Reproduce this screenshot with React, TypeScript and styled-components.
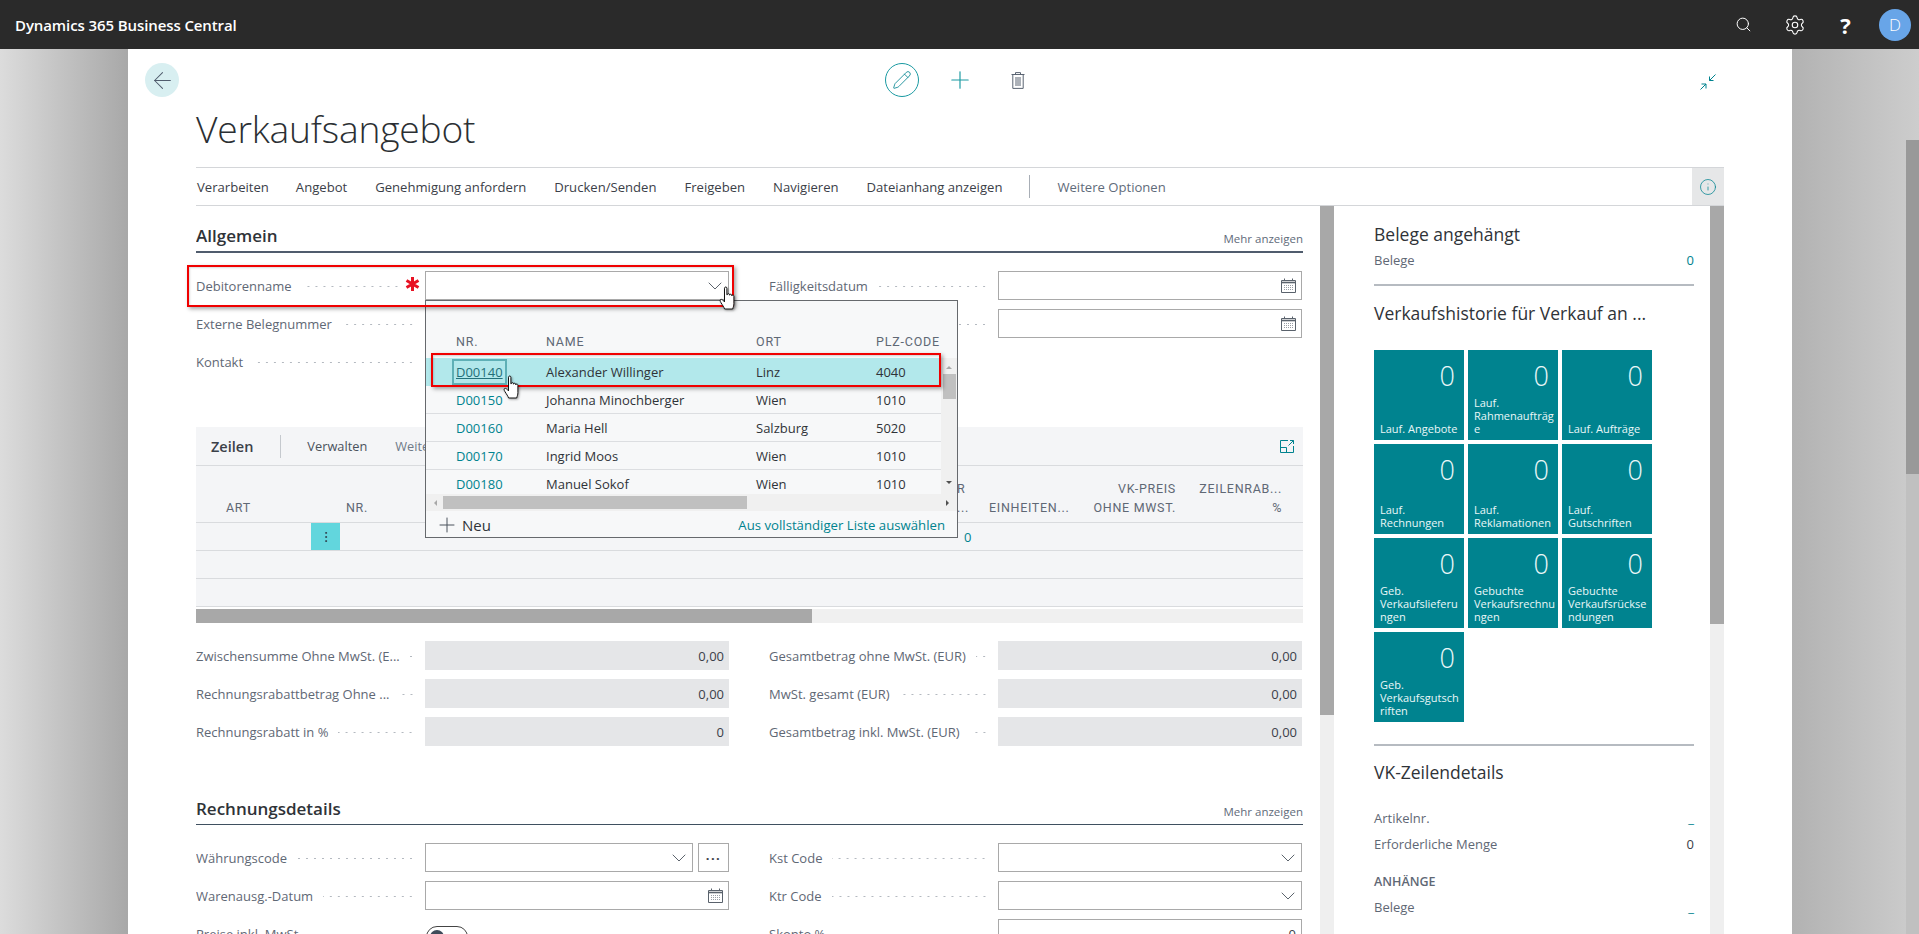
import React from "react";
import styled, { createGlobalStyle } from "styled-components";
import { ArrowLeft, ChevronDown, EllipsisVertical, Info, Pencil, Plus, Search, Settings } from "lucide-react";

const FONT = `"Open Sans", "Noto Sans", sans-serif`;

const Global = createGlobalStyle`
  html, body { margin: 0; padding: 0; height: 100%; overflow: hidden; background: #c4c4c4; }
  #root { height: 100%; }
  * { box-sizing: border-box; }
  body { font-family: ${FONT}; font-size: 13px; color: #505c6d; }
`;

const Stage = styled.div`
  position: relative;
  height: 934px;
  display: flex;
  flex-direction: column;
  overflow: hidden;
`;

/* top bar */
const TopBar = styled.header`
  height: 49px;
  flex: none;
  background: #2a2a2a;
  display: flex;
  align-items: center;
  padding: 0 8px 0 15px;
  color: #fff;
`;
const Brand = styled.div`
  font-size: 15px;
  font-weight: 600;
  letter-spacing: -0.1px;
  margin-right: auto;
`;
const BarIcon = styled.div`
  width: 51px;
  height: 49px;
  display: flex;
  align-items: center;
  justify-content: center;
`;
const Question = styled.span`
  font-size: 22px;
  font-weight: 700;
  color: #fff;
`;
const Avatar = styled.div`
  width: 32px;
  height: 32px;
  margin-left: 8px;
  border-radius: 50%;
  background: #68a5e8;
  color: #fff;
  display: flex;
  align-items: center;
  justify-content: center;
  font-size: 17px;
  font-weight: 300;
`;

/* backdrop */
const Backdrop = styled.div`
  flex: 1;
  min-height: 0;
  display: flex;
`;
const LeftGutter = styled.div`
  width: 128px;
  flex: none;
  background: linear-gradient(90deg, #dcdcdc, #a8a8a8);
`;
const RightGutter = styled.div`
  flex: 1;
  display: flex;
  justify-content: flex-end;
  background: linear-gradient(90deg, #b2b2b2, #cdcdcd);
`;
const PageBar = styled.div`
  width: 13px;
  margin-top: 91px;
  background: #c0c0c0;
`;
const PageThumb = styled.div`
  height: 334px;
  background: #999;
`;
const Sheet = styled.main`
  width: 1664px;
  flex: none;
  background: #fff;
  display: flex;
  flex-direction: column;
  min-height: 0;
`;

/* nav row */
const NavRow = styled.div`
  height: 53px;
  flex: none;
  padding: 14px 68px 0 17px;
  display: flex;
  align-items: flex-start;
`;
const RoundBtn = styled.div<{ $variant: "back" | "edit" }>`
  width: 34px;
  height: 34px;
  flex: none;
  border-radius: 50%;
  display: flex;
  align-items: center;
  justify-content: center;
  background: ${(p) => (p.$variant === "back" ? "#d8eff1" : "#fff")};
  border: ${(p) => (p.$variant === "edit" ? "1px solid #1a9aa2" : "none")};
  margin-left: ${(p) => (p.$variant === "edit" ? "706px" : "0")};
`;
const NavIcon = styled.div`
  width: 34px;
  height: 34px;
  margin-left: 24px;
  flex: none;
  display: flex;
  align-items: center;
  justify-content: center;
`;
const CollapseIcon = styled.div`
  margin-left: auto;
  margin-right: 8px;
  margin-top: 11px;
  height: 16px;
`;
const Title = styled.h1`
  margin: 0;
  height: 65px;
  padding-left: 68px;
  font-size: 37.2px;
  line-height: 54px;
  font-weight: 300;
  color: #2b2f33;
  letter-spacing: -0.2px;
`;

/* action bar */
const ActionBar = styled.nav`
  margin: 0 68px;
  height: 39px;
  flex: none;
  border-top: 1px solid #d4d6d9;
  border-bottom: 1px solid #d4d6d9;
  display: flex;
  align-items: center;
`;
const ActionItem = styled.span<{ $x: number; $muted?: boolean }>`
  margin-left: ${(p) => p.$x}px;
  padding-top: 1px;
  font-size: 13.1px;
  white-space: nowrap;
  color: ${(p) => (p.$muted ? "#5f6b7a" : "#3b4048")};
`;
const ActionDivider = styled.span`
  width: 1px;
  height: 23px;
  margin-left: 27px;
  background: #a8aeb6;
`;
const InfoBtn = styled.div`
  margin-left: auto;
  width: 32px;
  height: 37px;
  background: #e6e7e8;
  display: flex;
  align-items: center;
  justify-content: center;
`;

/* body */
const Body = styled.div`
  flex: 1;
  min-height: 0;
  margin: 0 68px;
  display: flex;
`;
const MainCol = styled.div`
  width: 1107px;
  flex: none;
  overflow: hidden;
`;
const VBar = styled.div<{ $thumb: number; $ml: number }>`
  width: 14px;
  flex: none;
  margin-left: ${(p) => p.$ml}px;
  background: linear-gradient(#a8a8a8 ${(p) => p.$thumb}px, #efefef ${(p) => p.$thumb}px);
`;
const SideCol = styled.aside`
  width: 376px;
  flex: none;
  padding: 0 16px 0 40px;
  overflow: hidden;
`;

/* section */
const SectionHead = styled.div<{ $heavy?: boolean; $top: number; $h: number }>`
  margin-top: ${(p) => p.$top}px;
  height: ${(p) => p.$h}px;
  display: flex;
  justify-content: space-between;
  align-items: flex-end;
  padding-bottom: 3px;
  border-bottom: ${(p) => (p.$heavy ? "2px solid #505c6d" : "1px solid #3f5060")};
`;
const SectionTitle = styled.h2`
  margin: 0;
  font-size: 17px;
  line-height: 24px;
  font-weight: 600;
  color: #2f3338;
`;
const MoreLink = styled.span`
  font-size: 11.5px;
  margin-bottom: 2px;
  color: #5f6b7a;
`;
const FieldGrid = styled.div<{ $top: number }>`
  margin-top: ${(p) => p.$top}px;
  display: grid;
  grid-template-columns: 533px 533px;
  column-gap: 40px;
`;
const FieldCol = styled.div`
  display: flex;
  flex-direction: column;
  gap: 9px;
`;
const Row = styled.div`
  height: 29px;
  display: flex;
  align-items: center;
`;
const LabelArea = styled.div`
  width: 229px;
  flex: none;
  display: flex;
  align-items: center;
  padding: 1px 10px 0 0;
`;
const LabelText = styled.span`
  font-size: 13px;
  white-space: nowrap;
  color: #5f6875;
`;
const Leader = styled.span`
  flex: 1;
  min-width: 0;
  height: 3px;
  margin-left: 10px;
  background-image: radial-gradient(circle, #b4b9c0 0.8px, transparent 1px);
  background-size: 8px 3px;
  background-repeat: repeat-x;
  background-position: right center;
`;
const Star = styled.svg`
  width: 15px;
  height: 14px;
  margin: -5px -5px 0 5px;
  flex: none;
`;
const Control = styled.div`
  flex: 1;
  display: flex;
  gap: 5px;
  height: 29px;
`;
const Box = styled.div<{ $filled?: boolean }>`
  flex: 1;
  height: 29px;
  display: flex;
  align-items: center;
  justify-content: flex-end;
  padding: 0 5px;
  font-size: 13px;
  color: #3b4048;
  background: ${(p) => (p.$filled ? "#e5e6e8" : "#fff")};
  border: ${(p) => (p.$filled ? "none" : "1px solid #a9a9a9")};
`;
const Chevron = styled(ChevronDown).attrs({ size: 24, strokeWidth: 0.9, color: "#4a525c" })`
  margin-right: -4px;
`;
const DotsBtn = styled.div`
  width: 31px;
  flex: none;
  border: 1px solid #a9a9a9;
  display: flex;
  align-items: center;
  justify-content: center;
  font-size: 13px;
  font-weight: 700;
  letter-spacing: 1.5px;
  color: #3b4048;
`;
const Toggle = styled.div`
  width: 42px;
  height: 22px;
  margin-top: 7px;
  margin-left: 1px;
  border: 1px solid #444;
  border-radius: 11px;
  padding: 3px;
`;
const Knob = styled.div`
  width: 14px;
  height: 14px;
  border-radius: 50%;
  background: #3f4b5a;
`;

/* lines */
const Lines = styled.section`
  margin-top: 51px;
  background: #f4f5f7;
`;
const LinesBar = styled.div`
  height: 39px;
  display: flex;
  align-items: center;
  padding: 0 9px 0 15px;
  border-bottom: 1px solid #d9dbde;
`;
const LinesTitle = styled.span`
  font-size: 14.5px;
  font-weight: 600;
  color: #3b4048;
`;
const LinesDivider = styled.span`
  width: 1px;
  height: 23px;
  margin: 0 26px 0 27px;
  background: #c5c9ce;
`;
const LinesAction = styled.span<{ $muted?: boolean }>`
  font-size: 12.8px;
  margin-right: 28px;
  color: ${(p) => (p.$muted ? "#6f7a88" : "#4a525c")};
`;
const ExpandIcon = styled.div`
  margin-left: auto;
  height: 14px;
`;
const LineGrid = styled.div`
  display: grid;
  grid-template-columns: 115px 29px 617px 32px 96px 95px 108px 15px;
`;
const HeadCell = styled.div<{ $right?: boolean; $pad?: number }>`
  height: 57px;
  border-bottom: 1px solid #d9dbde;
  display: flex;
  flex-direction: column;
  justify-content: flex-end;
  padding-bottom: 5px;
  padding-left: ${(p) => (p.$right ? 0 : p.$pad ?? 0)}px;
  padding-right: ${(p) => (p.$right ? p.$pad ?? 0 : 0)}px;
  text-align: ${(p) => (p.$right ? "right" : "left")};
  font-family: Roboto, ${FONT};
  font-size: 12.5px;
  line-height: 19px;
  font-weight: 400;
  letter-spacing: 0.7px;
  color: #5f6875;
  white-space: nowrap;
`;
const BodyCell = styled.div<{ $handle?: boolean; $link?: boolean }>`
  height: 28px;
  border-bottom: 1px solid #d9dbde;
  display: flex;
  align-items: center;
  justify-content: ${(p) => (p.$handle ? "center" : "flex-start")};
  padding-left: ${(p) => (p.$link ? 7 : 0)}px;
  background: ${(p) => (p.$handle ? "#62d6dd" : "transparent")};
  font-size: 13px;
  color: #00838f;
`;
const HBar = styled.div<{ $thumb: number }>`
  height: 14px;
  margin-top: 2px;
  background: linear-gradient(90deg, #a8a8a8 ${(p) => p.$thumb}px, #f0f0f0 ${(p) => p.$thumb}px);
`;

/* side pane */
const SideTitle = styled.h3<{ $top: number }>`
  margin: ${(p) => p.$top}px 0 0;
  font-size: 17.5px;
  line-height: 22px;
  font-weight: 400;
  color: #2f3338;
`;
const SideRow = styled.div<{ $top: number }>`
  margin-top: ${(p) => p.$top}px;
  height: 20px;
  display: flex;
  justify-content: space-between;
  align-items: center;
  font-size: 13px;
  color: #5f6875;
`;
const SideValue = styled.span<{ $teal?: boolean }>`
  color: ${(p) => (p.$teal ? "#00838f" : "#3b4048")};
`;
const SideRule = styled.div<{ $top: number }>`
  margin-top: ${(p) => p.$top}px;
  height: 2px;
  background: #b6bbc1;
`;
const TileGrid = styled.div`
  margin-top: 26px;
  display: grid;
  grid-template-columns: repeat(3, 90px);
  grid-auto-rows: 90px;
  gap: 4px;
`;
const Tile = styled.div`
  background: #00838f;
  color: #eaf7f8;
  display: flex;
  flex-direction: column;
  padding: 8px 6px 5px 6px;
`;
const TileValue = styled.div`
  text-align: right;
  padding-right: 3px;
  font-size: 27px;
  line-height: 36px;
  font-weight: 300;
`;
const TileLabel = styled.div`
  margin-top: auto;
  font-size: 11px;
  line-height: 13px;
  white-space: pre;
`;
const SideCaption = styled.div`
  margin-top: 18px;
  font-size: 12.5px;
  line-height: 20px;
  font-weight: 600;
  color: #5f6875;
`;

/* lookup dropdown */
const Lookup = styled.div`
  position: absolute;
  left: 425px;
  top: 300px;
  width: 533px;
  height: 238px;
  border: 1px solid #66696d;
  background: #f7f8f9;
  display: flex;
  flex-direction: column;
`;
const LookupGrid = styled.div`
  display: grid;
  grid-template-columns: 90px 210px 120px 1fr;
  padding-left: 30px;
`;
const LookupHead = styled(LookupGrid)`
  height: 57px;
  flex: none;
  align-items: end;
  padding-bottom: 9px;
  font-family: Roboto, ${FONT};
  font-size: 12.5px;
  font-weight: 400;
  letter-spacing: 0.8px;
  color: #5f6875;
`;
const LookupMiddle = styled.div`
  height: 136px;
  flex: none;
  display: flex;
  overflow: hidden;
`;
const LookupRows = styled.div`
  flex: 1;
  min-width: 0;
`;
const LookupRow = styled(LookupGrid)<{ $active?: boolean }>`
  height: 28px;
  align-items: center;
  font-size: 13px;
  color: #2f3338;
  background: ${(p) => (p.$active ? "#b2e8eb" : "transparent")};
  border-bottom: ${(p) => (p.$active ? "none" : "1px solid #dcdee1")};
`;
const NrLink = styled.span<{ $focused?: boolean }>`
  color: #00838f;
  justify-self: start;
  ${(p) =>
    p.$focused &&
    `
    text-decoration: underline;
    outline: 2px solid #5fb0b6;
    outline-offset: 2px;
    color: #24707a;
  `}
`;
const LookupVBar = styled.div`
  width: 16px;
  flex: none;
  background: #f0f0f0;
  display: flex;
  flex-direction: column;
  align-items: center;
  justify-content: space-between;
  padding-bottom: 7px;
`;
const LookupVThumb = styled.div`
  width: 13px;
  height: 25px;
  background: #c0c0c0;
`;
const ScrollArrow = styled.span<{ $dir: "up" | "down" | "left" | "right" }>`
  width: 0;
  height: 0;
  flex: none;
  border: 3.5px solid transparent;
  ${(p) => {
    const side = { up: "bottom", down: "top", left: "right", right: "left" }[p.$dir];
    const tone = p.$dir === "up" || p.$dir === "left" ? "#a8a8a8" : "#505050";
    return `border-${side}-color: ${tone};`;
  }}
`;
const ArrowSlot = styled.div`
  height: 16px;
  display: flex;
  flex-direction: column;
  align-items: center;
  justify-content: center;
`;
const LookupHBar = styled.div`
  height: 17px;
  flex: none;
  background: #f0f0f0;
  display: flex;
  align-items: center;
  padding: 0 5px;
`;
const LookupHThumb = styled.div`
  width: 304px;
  height: 13px;
  margin-left: 6px;
  margin-right: auto;
  background: #c0c0c0;
`;
const LookupFoot = styled.div`
  flex: 1;
  display: flex;
  align-items: center;
  justify-content: space-between;
  padding: 2px 12px 0 9px;
`;
const NewBtn = styled.span`
  display: flex;
  align-items: center;
  gap: 3px;
  font-size: 15px;
  color: #2f3338;
`;
const FullList = styled.span`
  font-size: 13.2px;
  color: #00838f;
`;

/* annotations */
const RedBox = styled.div<{ $l: number; $t: number; $w: number; $h: number }>`
  position: absolute;
  left: ${(p) => p.$l}px;
  top: ${(p) => p.$t}px;
  width: ${(p) => p.$w}px;
  height: ${(p) => p.$h}px;
  border: 2px solid #f00000;
  box-shadow: 2px 2px 4px rgba(0, 0, 0, 0.35), inset 1px 1px 2px rgba(0, 0, 0, 0.15);
  pointer-events: none;
`;
const Hand = styled.svg<{ $l: number; $t: number }>`
  position: absolute;
  left: ${(p) => p.$l}px;
  top: ${(p) => p.$t}px;
  width: 17px;
  height: 25px;
  filter: drop-shadow(1px 1px 1px rgba(0, 0, 0, 0.35));
`;

/* small drawings */
const CalendarIcon = () => (
  <svg width="15" height="15" viewBox="0 0 15 15" fill="none" stroke="#5a626c" strokeWidth="1">
    <path d="M.5 2.500h14v12H.5z" />
    <path d="M.5 4.500h14" strokeWidth="1.600" />
    <path d="M3.500.5v2M11.500.5v2" />
    <path d="M3 7.500h9M3 9.500h9M3 11.500h9" strokeDasharray="1 1" strokeWidth=".9" stroke="#8d939c" />
  </svg>
);
const TrashIcon = () => (
  <svg width="14" height="17" viewBox="0 0 14 17" fill="none" stroke="#5a6472" strokeWidth="1">
    <path d="M.5 2.500h13M4.500 2.500V.6h5v1.900M1.800 2.500v13.900h10.400V2.500M5 5v9M7 5v9M9 5v9" />
  </svg>
);
const HandPath = () => (
  <path
    d="M5.500 2.200c0-1.600 2.400-1.600 2.400 0v6.600l.4-.1c0-1.400 2.200-1.400 2.200 0v.5c0-1.300 2.200-1.300 2.200.1v.6c.1-1.200 2.200-1.100 2.200.3v7.500c0 2-.6 3-1.200 5.300H5.600c-.7-2-1.900-3.600-3.600-6.300-1-1.500-1.400-3 0-3.300.8-.2 1.800.5 3.500 2.500V2.200z"
    fill="#fff"
    stroke="#111"
    strokeWidth="1"
    strokeLinejoin="round"
  />
);

const LOOKUP = [
  ["D00140", "Alexander Willinger", "Linz", "4040"],
  ["D00150", "Johanna Minochberger", "Wien", "1010"],
  ["D00160", "Maria Hell", "Salzburg", "5020"],
  ["D00170", "Ingrid Moos", "Wien", "1010"],
  ["D00180", "Manuel Sokof", "Wien", "1010"],
];
const TILES = [
  "Lauf. Angebote",
  "Lauf.\nRahmenaufträg\ne",
  "Lauf. Aufträge",
  "Lauf.\nRechnungen",
  "Lauf.\nReklamationen",
  "Lauf.\nGutschriften",
  "Geb.\nVerkaufslieferu\nngen",
  "Gebuchte\nVerkaufsrechnu\nngen",
  "Gebuchte\nVerkaufsrückse\nndungen",
  "Geb.\nVerkaufsgutsch\nriften",
];

const Field: React.FC<{ label?: string; required?: boolean; children?: React.ReactNode }> = ({ label, required, children }) => (
  <Row>
    <LabelArea>
      {label && <LabelText>{label}</LabelText>}
      <Leader />
      {required && (
        <Star viewBox="0 0 15 14" stroke="#e81123" strokeWidth="3">
          <path d="M7.500 0v14M1.500 3.500l12 7M13.500 3.500l-12 7" />
        </Star>
      )}
    </LabelArea>
    <Control>{children}</Control>
  </Row>
);

const ActionItems: [string, number][] = [
  ["Verarbeiten", 1],
  ["Angebot", 27],
  ["Genehmigung anfordern", 28],
  ["Drucken/Senden", 28],
  ["Freigeben", 28],
  ["Navigieren", 28],
  ["Dateianhang anzeigen", 28],
];

export default function App() {
  return (
    <Stage>
      <Global />
      <TopBar>
        <Brand>Dynamics 365 Business Central</Brand>
        <BarIcon><Search size={17} strokeWidth={1.4} color="#fff" /></BarIcon>
        <BarIcon><Settings size={22} strokeWidth={1.2} color="#fff" /></BarIcon>
        <BarIcon><Question>?</Question></BarIcon>
        <Avatar>D</Avatar>
      </TopBar>
      <Backdrop>
        <LeftGutter />
        <Sheet>
          <NavRow>
            <RoundBtn $variant="back"><ArrowLeft size={27} strokeWidth={0.9} color="#505c6d" /></RoundBtn>
            <RoundBtn $variant="edit"><Pencil size={20} strokeWidth={1} color="#00838f" /></RoundBtn>
            <NavIcon><Plus size={28} strokeWidth={1} color="#1a9aa2" /></NavIcon>
            <NavIcon><TrashIcon /></NavIcon>
            <CollapseIcon>
              <svg width="16" height="16" viewBox="0 0 16 16" fill="none" stroke="#00838f" strokeWidth="1">
                <path d="M15.500.5L9.500 6.500M9.500 2.500v4h4M.5 15.500L6 10M1.500 10H6v4.500" />
              </svg>
            </CollapseIcon>
          </NavRow>
          <Title>Verkaufsangebot</Title>
          <ActionBar>
            {ActionItems.map(([t, x]) => <ActionItem key={t} $x={x}>{t}</ActionItem>)}
            <ActionDivider />
            <ActionItem $x={27} $muted>Weitere Optionen</ActionItem>
            <InfoBtn><Info size={18} strokeWidth={1} color="#00838f" /></InfoBtn>
          </ActionBar>
          <Body>
            <MainCol>
              <SectionHead $heavy $top={0} $h={47}>
                <SectionTitle>Allgemein</SectionTitle>
                <MoreLink>Mehr anzeigen</MoreLink>
              </SectionHead>
              <FieldGrid $top={18}>
                <FieldCol>
                  <Field label="Debitorenname" required><Box><Chevron /></Box></Field>
                  <Field label="Externe Belegnummer"><Box /></Field>
                  <Field label="Kontakt"><Box /></Field>
                </FieldCol>
                <FieldCol>
                  <Field label="Fälligkeitsdatum"><Box><CalendarIcon /></Box></Field>
                  <Field><Box><CalendarIcon /></Box></Field>
                </FieldCol>
              </FieldGrid>
              <Lines>
                <LinesBar>
                  <LinesTitle>Zeilen</LinesTitle>
                  <LinesDivider />
                  <LinesAction>Verwalten</LinesAction>
                  <LinesAction $muted>Weitere Optionen</LinesAction>
                  <ExpandIcon>
                    <svg width="14" height="13" viewBox="0 0 14 13" fill="none" stroke="#00838f" strokeWidth="1">
                      <path d="M8 .5H.5v12h13V6M.5 7.500H6.500v5M8.500 5.500L13.500.5M10 .5h3.500V4" />
                    </svg>
                  </ExpandIcon>
                </LinesBar>
                <LineGrid>
                  <HeadCell $pad={30}>ART</HeadCell>
                  <HeadCell />
                  <HeadCell $pad={6}>NR.</HeadCell>
                  <HeadCell $pad={0}><span>R</span><span>...</span></HeadCell>
                  <HeadCell><span>EINHEITEN...</span></HeadCell>
                  <HeadCell $right $pad={4}><span>VK-PREIS</span><span>OHNE MWST.</span></HeadCell>
                  <HeadCell $right $pad={6}><span>ZEILENRAB...</span><span>%</span></HeadCell>
                  <HeadCell />
                  {Array.from({ length: 3 }).flatMap((_, r) =>
                    Array.from({ length: 8 }).map((_, c) => (
                      <BodyCell key={`${r}-${c}`} $handle={r === 0 && c === 1} $link={r === 0 && c === 3}>
                        {r === 0 && c === 1 && <EllipsisVertical size={14} strokeWidth={1.5} color="#2f3b48" />}
                        {r === 0 && c === 3 && "0"}
                      </BodyCell>
                    ))
                  )}
                </LineGrid>
              </Lines>
              <HBar $thumb={616} />
              <FieldGrid $top={18}>
                <FieldCol>
                  <Field label="Zwischensumme Ohne MwSt. (E..."><Box $filled>0,00</Box></Field>
                  <Field label="Rechnungsrabattbetrag Ohne ..."><Box $filled>0,00</Box></Field>
                  <Field label="Rechnungsrabatt in %"><Box $filled>0</Box></Field>
                </FieldCol>
                <FieldCol>
                  <Field label="Gesamtbetrag ohne MwSt. (EUR)"><Box $filled>0,00</Box></Field>
                  <Field label="MwSt. gesamt (EUR)"><Box $filled>0,00</Box></Field>
                  <Field label="Gesamtbetrag inkl. MwSt. (EUR)"><Box $filled>0,00</Box></Field>
                </FieldCol>
              </FieldGrid>
              <SectionHead $top={37} $h={42}>
                <SectionTitle>Rechnungsdetails</SectionTitle>
                <MoreLink>Mehr anzeigen</MoreLink>
              </SectionHead>
              <FieldGrid $top={18}>
                <FieldCol>
                  <Field label="Währungscode"><Box><Chevron /></Box><DotsBtn>···</DotsBtn></Field>
                  <Field label="Warenausg.-Datum"><Box><CalendarIcon /></Box></Field>
                  <Field label="Preise inkl. MwSt."><Toggle><Knob /></Toggle></Field>
                </FieldCol>
                <FieldCol>
                  <Field label="Kst Code"><Box><Chevron /></Box></Field>
                  <Field label="Ktr Code"><Box><Chevron /></Box></Field>
                  <Field label="Skonto %"><Box>0</Box></Field>
                </FieldCol>
              </FieldGrid>
            </MainCol>
            <VBar $thumb={509} $ml={17} />
            <SideCol>
              <SideTitle $top={17}>Belege angehängt</SideTitle>
              <SideRow $top={5}>Belege<SideValue $teal>0</SideValue></SideRow>
              <SideRule $top={14} />
              <SideTitle $top={16}>Verkaufshistorie für Verkauf an ...</SideTitle>
              <TileGrid>
                {TILES.map((t) => (
                  <Tile key={t}>
                    <TileValue>0</TileValue>
                    <TileLabel>{t}</TileLabel>
                  </Tile>
                ))}
              </TileGrid>
              <SideRule $top={22} />
              <SideTitle $top={15}>VK-Zeilendetails</SideTitle>
              <SideRow $top={25}>Artikelnr.<SideValue $teal>_</SideValue></SideRow>
              <SideRow $top={6}>Erforderliche Menge<SideValue>0</SideValue></SideRow>
              <SideCaption>ANHÄNGE</SideCaption>
              <SideRow $top={5}>Belege<SideValue $teal>_</SideValue></SideRow>
            </SideCol>
            <VBar $thumb={418} $ml={0} />
          </Body>
        </Sheet>
        <RightGutter>
          <PageBar><PageThumb /></PageBar>
        </RightGutter>
      </Backdrop>

      <Lookup>
        <LookupHead>
          <span>NR.</span><span>NAME</span><span>ORT</span><span>PLZ-CODE</span>
        </LookupHead>
        <LookupMiddle>
          <LookupRows>
            {LOOKUP.map(([nr, name, city, zip], i) => (
              <LookupRow key={nr} $active={i === 0}>
                <NrLink $focused={i === 0}>{nr}</NrLink>
                <span>{name}</span>
                <span>{city}</span>
                <span>{zip}</span>
              </LookupRow>
            ))}
          </LookupRows>
          <LookupVBar>
            <div>
              <ArrowSlot><ScrollArrow $dir="up" /></ArrowSlot>
              <LookupVThumb />
            </div>
            <ScrollArrow $dir="down" />
          </LookupVBar>
        </LookupMiddle>
        <LookupHBar>
          <ScrollArrow $dir="left" />
          <LookupHThumb />
          <ScrollArrow $dir="right" />
        </LookupHBar>
        <LookupFoot>
          <NewBtn><Plus size={24} strokeWidth={1} color="#4a525c" />Neu</NewBtn>
          <FullList>Aus vollständiger Liste auswählen</FullList>
        </LookupFoot>
      </Lookup>

      <RedBox $l={187} $t={265} $w={547} $h={42} />
      <RedBox $l={431} $t={353} $w={510} $h={34} />
      <Hand $l={719} $t={286} viewBox="0 0 17 25"><HandPath /></Hand>
      <Hand $l={503} $t={375} viewBox="0 0 17 25"><HandPath /></Hand>
    </Stage>
  );
}
